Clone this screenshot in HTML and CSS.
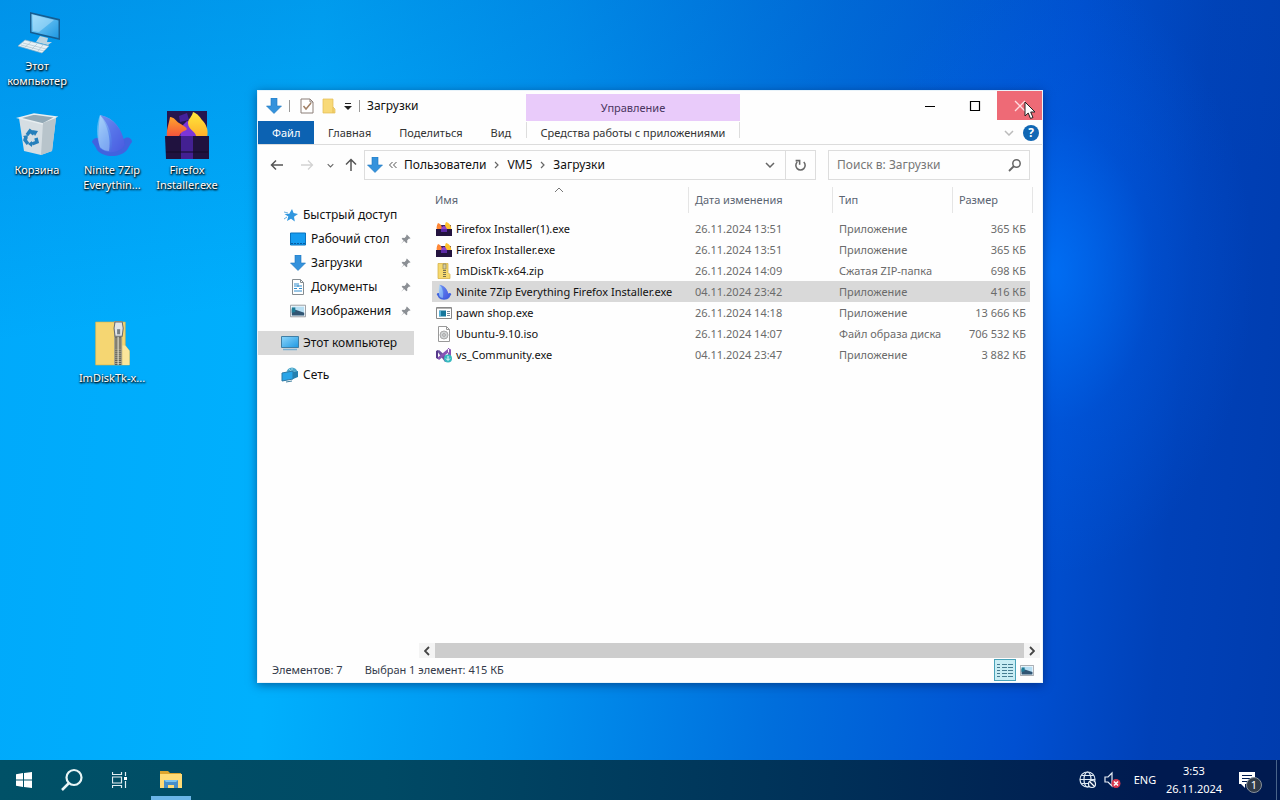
FILE: index.html
```html
<!DOCTYPE html>
<html lang="ru">
<head>
<meta charset="utf-8">
<title>Загрузки</title>
<link rel="stylesheet" href="styles.css">
</head>
<body>
<svg class="defs" width="0" height="0" aria-hidden="true">
  <defs>
    <linearGradient id="g-fin" x1="0" y1="0" x2="1" y2="1"><stop offset="0" stop-color="#a5d0fb"/><stop offset=".5" stop-color="#5a86ee"/><stop offset="1" stop-color="#3b45d4"/></linearGradient>
    <linearGradient id="g-fire" x1="0" y1="0" x2="0" y2="1"><stop offset="0" stop-color="#ffa52c"/><stop offset="1" stop-color="#f5503c"/></linearGradient>
    <linearGradient id="g-yellow" x1="0" y1="0" x2="0" y2="1"><stop offset="0" stop-color="#ffe93c"/><stop offset="1" stop-color="#ffae2a"/></linearGradient>
    <linearGradient id="g-screen" x1="0" y1="0" x2="1" y2="1"><stop offset="0" stop-color="#8ed6fb"/><stop offset="1" stop-color="#1e98e2"/></linearGradient>
    <symbol id="i-down" viewBox="0 0 16 16"><path d="M5 0h6v8h4.500L8 15.500.5 8H5z" fill="#3492dc" stroke="#1d75c0" stroke-width=".6"/></symbol>
    <symbol id="i-fin" viewBox="0 0 42 44"><path d="M1 29c1-4 5-5 8-3h24c3-3 8-1 8 3-2 2-3 5-5 8-7 8-23 8-30 0-1-3-3-5-5-8z" fill="#4163df"/><path d="M9 2c14 3 22 13 25 30-7 9-18 9-25 3-3-11-1-23 0-33z" fill="url(#g-fin)"/><path d="M9 2c9 9 13 20 12 37 6 0 10-3 13-7C31 15 22 5 9 2z" fill="#5468e6" opacity=".6"/><path d="M9 2C5 12 5 23 9 34c3 3 6 4 9 4 2-12-1-25-9-36z" fill="#a9d5fa" opacity=".5"/></symbol>
    <symbol id="i-fox" viewBox="0 0 44 48"><path d="M2 0h40v26H2z" fill="#25164f"/><path d="M14 5l8-3 2 7-9 2z" fill="#44219b"/><path d="M17 15l5-5 8 3 3 13H15z" fill="#7d35d8"/><path d="M2 26C1 19 4 13 5 6c4 0 6 4 9 6 3 2 6 3 8 6-2 3-6 1-8 8z" fill="url(#g-fire)"/><path d="M31 26c1-5-8-7-8-14 0-4 4-6 5-11 5 2 7 5 9 8 4 4 7 10 5 17z" fill="url(#g-yellow)"/><path d="M0 25h44v23H1z" fill="#20123f"/><path d="M16 25h12v23H16z" fill="#432092"/><path d="M1 41h42" stroke="#120a29"/></symbol>
    <symbol id="i-fox-small" viewBox="0 0 16 16"><path d="M1 4h14v6H1z" fill="#3a2160"/><path d="M1 9c-1-3 0-5 1-7 3 1 4 3 4 7z" fill="#ff8736"/><path d="M10 9c0-3-2-4 0-8 4 1 6 5 5 8z" fill="#ffc22f"/><path d="M5 9c0-3 2-4 3-4s3 2 3 4z" fill="#8e45cf"/><path d="M0 8h16v7H0z" fill="#24143f"/><path d="M5 8h6v3H5z" fill="#5c2aa5"/></symbol>
    <symbol id="i-zip" viewBox="0 0 36 44"><path d="M1 1h29v23l4 5v14H1z" fill="#f5d672" stroke="#d9b244" stroke-width=".6"/><path d="M30 24l4 5v14h-7V24z" fill="#fbe69a"/><path d="M19 0h8v43h-8z" fill="#aaa58a"/><path d="M23 12v31" stroke="#5c5d58" stroke-width="6" stroke-dasharray="1 1"/><path d="M23 12v31" stroke="#e9e6d7" stroke-width="1"/><path d="M20 1h7l1 6-1 8h-7l-1-8z" fill="#e1e4e7" stroke="#686d72"/><path d="M22 8h3v5h-3z" fill="#777f86"/></symbol>
    <symbol id="i-pin" viewBox="0 0 12 12"><path d="M7.500.5l4 4-1 .7-.7-.2-2 2 .2 2.200-1 1L4.500 7.700 1 11l3-3.700-2.200-2.200 1-1L5 4.300l2-2-.2-.9z" fill="#8b8f94"/></symbol>
    <symbol id="i-picture" viewBox="0 0 18 14"><path d="M.5.5h17v13H.5z" fill="#fff" stroke="#8c9298"/><path d="M2 2h14v10H2z" fill="#b6def3"/><path d="M2 5l5 1 9 3v3H2z" fill="#315573"/><path d="M2 3h4v5l-4 1z" fill="#1f7b96"/></symbol>
    <symbol id="i-monitor" viewBox="0 0 18 16"><path d="M.5 1.500h17v11H.5z" fill="url(#g-screen)" stroke="#3f7ea5"/><path d="M2 14.500h14" stroke="#7db1d2" stroke-width="1.500"/></symbol>
    <symbol id="i-chev" viewBox="0 0 10 6"><path d="M1 1l4 4 4-4" fill="none" stroke="currentColor" stroke-width="1.500"/></symbol>
  </defs>
</svg>
<main class="desktop">
  <a href="#" class="shortcut pc"><svg class="big" viewBox="0 0 48 48"><path d="M17 3l30 7v21l-30-7z" fill="#155d91"/><path d="M18.500 5l27 6.500v17.500l-27-6.300z" fill="url(#g-screen)"/><path d="M20 6l21 5-15 12-6-1z" fill="#c0e8fc" opacity=".45"/><path d="M27 27l8 2-1 4h5l-4 3-12-3z" fill="#bdd5e1"/><path d="M12 31l24 6-7 7-24-7z" fill="#e8f1f6" stroke="#8eb2c6" stroke-width=".7"/><path d="M10 34l23 6M8 36l23 6M18 33l-6 5M24 35l-5 5M30 36l-5 6" stroke="#abc3cf" stroke-width=".7"/></svg><span>Этот компьютер</span></a>
  <a href="#" class="shortcut bin"><svg class="big" viewBox="0 0 48 48"><path d="M6 5l15-4 22 4-4 33-11 4-17-4z" fill="#d6dee3"/><path d="M6 5l15-4 22 3-13 7z" fill="#93a9b6" stroke="#e8eef1" stroke-width="1.500"/><path d="M30 10l13-5-4 33-11 4z" fill="#b8c4cb"/><g fill="none" stroke="#267fbb" stroke-width="3.500"><path d="M14 22l3-4 4 3M23 25l1 4-5 2M15 31l-3-4 1-3"/></g><path d="M19 17l6 1-3 5zM19 28v6l-4-3zM10 23l5-1-1 5z" fill="#267fbb"/></svg><span>Корзина</span></a>
  <a href="#" class="shortcut ninite"><svg class="big"><use href="#i-fin" x="2" y="0" width="44" height="44"/></svg><span>Ninite 7Zip Everythin...</span></a>
  <a href="#" class="shortcut firefox"><svg class="big"><use href="#i-fox" x="1" y="0" width="46" height="48"/></svg><span>Firefox Installer.exe</span></a>
  <a href="#" class="shortcut imdisk"><svg class="big"><use href="#i-zip" x="6" y="2" width="38" height="45"/></svg><span>ImDiskTk-x...</span></a>

  <section class="window" aria-label="Загрузки">
    <header class="ribbon">
      <div class="ribbon-left">
        <div class="title">
          <svg class="ic16"><use href="#i-down"/></svg><i class="bar first"></i>
          <button class="plain" aria-label="Свойства"><svg class="qat" viewBox="0 0 14 16"><path d="M1 1h9l3 3v11H1z" fill="#fff" stroke="#8b7e78"/><path d="M10 1v3h3" fill="none" stroke="#8b7e78"/><path d="M3.500 8l2.500 3 5-6" fill="none" stroke="#a28065" stroke-width="1.500"/></svg></button>
          <button class="plain" aria-label="Новая папка"><svg class="qat" viewBox="0 0 14 16"><path d="M1 1h10v8l2 2v4H1z" fill="#f8d978" stroke="#e4bc52" stroke-width=".7"/><path d="M11 9v6" stroke="#e4bc52"/></svg></button>
          <button class="plain" aria-label="Настройка панели"><svg class="ic8" viewBox="0 0 8 8"><path d="M1 1.500h6" stroke="#222"/><path d="M0 4h8L4 8z" fill="#222"/></svg></button><i class="bar"></i>
          <h1>Загрузки</h1>
        </div>
        <nav class="tabs"><button class="file">Файл</button><button>Главная</button><button>Поделиться</button><button>Вид</button></nav>
      </div>
      <div class="context"><div class="context-title">Управление</div><button class="context-tab">Средства работы с приложениями</button></div>
      <div class="ribbon-right">
        <div class="controls">
          <button aria-label="Свернуть"><svg viewBox="0 0 12 12"><path d="M1 6.500h10" stroke="#000"/></svg></button>
          <button aria-label="Развернуть"><svg viewBox="0 0 12 12"><path d="M1.500 1.500h9v9h-9z" fill="none" stroke="#000" stroke-width="1.200"/></svg></button>
          <button class="close" aria-label="Закрыть"><svg viewBox="0 0 12 12"><path d="M1 1l10 10M11 1L1 11" stroke="#ffdcdf" stroke-width="1.300"/></svg><svg class="cursor" viewBox="0 0 12 19"><path d="M1 1v14l3.200-3 2.300 5.500 2.500-1L6.700 11H11z" fill="#fff" stroke="#222"/></svg></button>
        </div>
        <div class="help-row"><button class="plain pale" aria-label="Развернуть ленту"><svg class="chev"><use href="#i-chev"/></svg></button><button class="help" aria-label="Справка">?</button></div>
      </div>
    </header>
    <div class="location">
      <button class="plain" aria-label="Назад"><svg viewBox="0 0 14 14"><path d="M13 7H2M6 2.500L1.500 7 6 11.500" fill="none" stroke="#555" stroke-width="1.500"/></svg></button>
      <button class="plain forward" aria-label="Вперёд"><svg viewBox="0 0 14 14"><path d="M1 7h11M8 2.500L12.500 7 8 11.500" fill="none" stroke="#d2d2d2" stroke-width="1.300"/></svg></button>
      <button class="plain recent" aria-label="Последние"><svg class="tiny"><use href="#i-chev"/></svg></button>
      <button class="plain up" aria-label="Вверх"><svg viewBox="0 0 14 14"><path d="M7 13V2M2 6.500L7 1.500l5 5" fill="none" stroke="#555" stroke-width="1.500"/></svg></button>
      <div class="address">
        <svg class="ic16"><use href="#i-down"/></svg>
        <svg class="laquo" viewBox="0 0 8 8"><path d="M3.500 1l-3 3 3 3M7.500 1l-3 3 3 3" fill="none" stroke="#555"/></svg>
        <a href="#">Пользователи</a><svg class="sep" viewBox="0 0 5 8"><path d="M1 1l3 3-3 3" fill="none" stroke="#666" stroke-width="1.200"/></svg>
        <a href="#">VM5</a><svg class="sep" viewBox="0 0 5 8"><path d="M1 1l3 3-3 3" fill="none" stroke="#666" stroke-width="1.200"/></svg>
        <a href="#">Загрузки</a>
        <button class="plain drop" aria-label="Журнал"><svg class="chev"><use href="#i-chev"/></svg></button>
        <button class="refresh" aria-label="Обновить"><svg viewBox="0 0 12 12"><path d="M3 2.800a4.300 4.300 0 1 0 6 0M1.500 1.500h3.700v3.700" fill="none" stroke="#666" stroke-width="1.400"/></svg></button>
      </div>
      <div class="search"><input type="search" placeholder="Поиск в: Загрузки" aria-label="Поиск"><svg viewBox="0 0 14 14"><circle cx="8.500" cy="5.500" r="3.700" fill="none" stroke="#666" stroke-width="1.500"/><path d="M6 8l-5 5" stroke="#666" stroke-width="1.800"/></svg></div>
    </div>
    <div class="content">
      <nav class="tree">
        <a href="#" class="root"><svg class="ic16" viewBox="0 0 16 16"><path d="M9 2l1.600 4L15 7l-4 2.800.8 4.700L8 11.800 4 14l1.300-4.400L1.500 7l4.800-.3z" fill="#3197df"/><path d="M1 5l4 1M1 12l3-2" stroke="#64afe2"/></svg>Быстрый доступ</a>
        <a href="#"><svg class="ic16" viewBox="0 0 16 16"><path d="M.5 2h15v12H.5z" fill="#159cf0" stroke="#0872bd"/><path d="M1 12.500h14" stroke="#075ca0" stroke-dasharray="2 1"/></svg>Рабочий стол<svg class="pin"><use href="#i-pin"/></svg></a>
        <a href="#"><svg class="ic16"><use href="#i-down"/></svg>Загрузки<svg class="pin"><use href="#i-pin"/></svg></a>
        <a href="#"><svg class="ic16" viewBox="0 0 16 16"><path d="M2.500.5h8l3 3v12h-11z" fill="#fff" stroke="#858c91"/><path d="M10.500.5v3h3" fill="none" stroke="#858c91"/><path d="M4 5h3M4 7h8M4 9.500h3m2 0h3M4 12h8M8 4v4" stroke="#328dcd"/></svg>Документы<svg class="pin"><use href="#i-pin"/></svg></a>
        <a href="#"><svg class="ic16"><use href="#i-picture"/></svg>Изображения<svg class="pin"><use href="#i-pin"/></svg></a>
        <a href="#" class="root selected"><svg class="ic18"><use href="#i-monitor"/></svg>Этот компьютер</a>
        <a href="#" class="root net"><svg class="ic18" viewBox="0 0 18 16"><circle cx="11" cy="6" r="5.500" fill="#4ba6ca"/><path d="M6 5h10M11 1v10M8 2c3 3 4 5 1 8" stroke="#9bd8ec" fill="none"/><path d="M1 6l11-2v8L1 14z" fill="#29a5e8" stroke="#2a78a4"/><path d="M12 5l5-1v6l-5 2z" fill="#267fae"/><path d="M5 15l6-1" stroke="#407e9d"/></svg>Сеть</a>
      </nav>
      <div class="files">
        <table>
          <colgroup><col><col class="c-date"><col class="c-type"><col class="c-size"></colgroup>
          <thead><tr><th>Имя<svg class="sort" viewBox="0 0 10 6"><path d="M1 5l4-4 4 4" fill="none" stroke="#777"/></svg></th><th>Дата изменения</th><th>Тип</th><th>Размер</th></tr></thead>
          <tbody>
            <tr><td><svg class="ic16"><use href="#i-fox-small"/></svg>Firefox Installer(1).exe</td><td>26.11.2024 13:51</td><td>Приложение</td><td>365 КБ</td></tr>
            <tr><td><svg class="ic16"><use href="#i-fox-small"/></svg>Firefox Installer.exe</td><td>26.11.2024 13:51</td><td>Приложение</td><td>365 КБ</td></tr>
            <tr><td><svg class="ic16" viewBox="0 0 16 16"><path d="M2 .5h10v9l2 2v4H2z" fill="#f6d96e" stroke="#d1ac41" stroke-width=".7"/><path d="M8.500 1v14" stroke="#777050" stroke-width="3" stroke-dasharray="1 1"/><path d="M7 1h3v5H7z" fill="#d2cba3" stroke="#827744" stroke-width=".6"/></svg>ImDiskTk-x64.zip</td><td>26.11.2024 14:09</td><td>Сжатая ZIP-папка</td><td>698 КБ</td></tr>
            <tr class="selected"><td><svg class="ic16"><use href="#i-fin"/></svg>Ninite 7Zip Everything Firefox Installer.exe</td><td>04.11.2024 23:42</td><td>Приложение</td><td>416 КБ</td></tr>
            <tr><td><svg class="ic16" viewBox="0 0 16 16"><path d="M.5 2.500h15v11H.5z" fill="#fff" stroke="#888"/><path d="M1 3.500h14" stroke="#b4b4b4"/><path d="M3 5.500h7v6H3z" fill="#16779c"/><path d="M11 6.500h3m-3 2h3m-3 2h3" stroke="#789"/><path d="M3 6h2v5H3z" fill="#55b0d7"/></svg>pawn shop.exe</td><td>26.11.2024 14:18</td><td>Приложение</td><td>13 666 КБ</td></tr>
            <tr><td><svg class="ic16" viewBox="0 0 16 16"><path d="M2.500.5h8l3 3v12h-11z" fill="#fff" stroke="#999"/><path d="M10.500.5v3h3" fill="none" stroke="#999"/><circle cx="8" cy="9" r="4" fill="#d1d4d5" stroke="#aaa"/><circle cx="8" cy="9" r="1.300" fill="#fff" stroke="#999"/></svg>Ubuntu-9.10.iso</td><td>26.11.2024 14:07</td><td>Файл образа диска</td><td>706 532 КБ</td></tr>
            <tr><td><svg class="ic16" viewBox="0 0 16 16"><path d="M1 4l2-1 9 8v3L9 15z" fill="#69509f"/><path d="M12 1l3 1.500V12l-3 2zM1 11l2 2L13 5V1z" fill="#8854b5"/><path d="M0 4l2-1v9l-2-1z" fill="#563a8b"/><circle cx="12" cy="11.500" r="4" fill="#37bac0"/><path d="M12 9v4m-2-1.500l2 2 2-2" stroke="#e7ffff" fill="none"/></svg>vs_Community.exe</td><td>04.11.2024 23:47</td><td>Приложение</td><td>3 882 КБ</td></tr>
          </tbody>
        </table>
        <div class="scroll"><button aria-label="Влево"><svg viewBox="0 0 6 10"><path d="M5 1L1 5l4 4" fill="none" stroke="#444" stroke-width="1.800"/></svg></button><div class="thumb"></div><button aria-label="Вправо"><svg viewBox="0 0 6 10"><path d="M1 1l4 4-4 4" fill="none" stroke="#444" stroke-width="1.800"/></svg></button></div>
      </div>
    </div>
    <footer class="status"><span>Элементов: 7</span><span>Выбран 1 элемент: 415 КБ</span>
      <button class="view on" aria-label="Таблица"><svg viewBox="0 0 18 16"><path d="M1 2.500h3M1 5.500h3M1 8.500h3M1 11.500h3M1 14.500h3" stroke="#45798f"/><path d="M6 2.500h11M6 5.500h11M6 8.500h11M6 11.500h11M6 14.500h11" stroke="#477d91" stroke-dasharray="5 1"/></svg></button>
      <button class="view" aria-label="Крупные значки"><svg class="thumbs"><use href="#i-picture"/></svg></button>
    </footer>
  </section>
</main>
<footer class="taskbar">
  <button aria-label="Пуск"><svg class="start" viewBox="0 0 16 16"><path d="M0 2.200L7 1v6.500H0zM8 1l8-1v7.500H8zM0 8.500h7V15l-7-1.200zM8 8.500h8V16l-8-1z" fill="#fff"/></svg></button>
  <button aria-label="Поиск"><svg class="find" viewBox="0 0 24 24"><circle cx="14" cy="9.500" r="7.500" fill="none" stroke="#e8f5f6" stroke-width="2.200"/><path d="M9 15l-7 7" stroke="#e8f5f6" stroke-width="2.500"/></svg></button>
  <button aria-label="Представление задач"><svg class="start" viewBox="0 0 16 16"><path d="M.5 0v2.500h9V0M.5 5h9v6h-9zM.5 16v-2.500h9V16M13.500 0v4M13.500 9v7" fill="none" stroke="#e1eef2" stroke-width="1.200"/><path d="M12 5h3v3h-3z" fill="#fff"/></svg></button>
  <button class="active" aria-label="Проводник"><svg class="explorer" viewBox="0 0 22 18"><path d="M0 0h8l2 2h11v3H0z" fill="#dda52f"/><path d="M0 3h22v14H0z" fill="#ffdb76"/><path d="M4 9h14v8h-4v-3H8v3H4z" fill="#468ec9"/><path d="M4 9h14l-2 2H6z" fill="#7ac3ef"/></svg></button>
  <div class="tray">
    <button aria-label="Сеть"><svg viewBox="0 0 18 18"><g fill="none" stroke="#dfebf4" stroke-width="1.200"><circle cx="8.500" cy="8.500" r="7.500"/><ellipse cx="8.500" cy="8.500" rx="3.500" ry="7.500"/><path d="M1 8.500h15M2.500 4.500h12M2.500 12.500h8"/></g><circle cx="13" cy="13" r="3.500" fill="#06214b" stroke="#e9f2f8" stroke-width="1.200"/><path d="M10.500 10.500l5 5" stroke="#fff" stroke-width="1.200"/></svg></button>
    <button aria-label="Звук отключён"><svg viewBox="0 0 18 18"><path d="M2 6h3l4-4v13l-4-4H2z" fill="none" stroke="#e7eef5" stroke-width="1.200"/><circle cx="13" cy="12.500" r="4.500" fill="#d8384e"/><path d="M11 10.500l4 4m0-4l-4 4" stroke="#fff" stroke-width="1.500"/></svg></button>
    <button class="lang">ENG</button>
    <button class="clock"><span>3:53</span><span>26.11.2024</span></button>
    <button class="notice" aria-label="Уведомления"><svg viewBox="0 0 18 18"><path d="M1 1h16v12H7v4l-4-4H1z" fill="#fff"/><path d="M4 4.500h10M4 7.500h10M4 10.500h7" stroke="#001b50" stroke-width="1.200"/></svg><b>1</b></button>
  </div>
</footer>
</body>
</html>
```
FILE: styles.css
```css
* { box-sizing: border-box; }
body {
  margin: 0;
  height: 100vh;
  display: flex;
  flex-direction: column;
  overflow: hidden;
  font: 12px/16px "Noto Sans", "Open Sans", sans-serif;
  color: #111;
  background:
    radial-gradient(ellipse 16% 38% at 82% 34%, rgba(0, 120, 255, .75), rgba(0, 100, 240, .25) 50%, transparent),
    linear-gradient(172deg, rgba(0, 80, 180, .25), transparent 35%),
    linear-gradient(95deg, #00a9fb 0%, #00b0fd 24%, #0095f0 42%, #006edc 62%, #0050d2 80%, #0041b8 90%, #003cae 100%);
}
button, input { font: inherit; color: inherit; border: 0; padding: 0; background: none; }
a { color: inherit; text-decoration: none; }
svg { flex: none; display: block; }
.defs { position: absolute; }
.desktop { position: relative; flex: 1; min-height: 0; }

.shortcut {
  position: absolute;
  width: 74px;
  display: flex;
  flex-direction: column;
  align-items: center;
  gap: 1px;
  line-height: 15px;
  font-size: 11px;
  text-align: center;
  color: #fff;
  text-shadow: 0 1px 2px #000, 1px 1px 2px #000;
}
.big { width: 48px; height: 48px; }
.pc { left: 0; top: 9px; }
.bin { left: 0; top: 113px; }
.ninite { left: 75px; top: 113px; }
.firefox { left: 150px; top: 111px; gap: 3px; }
.imdisk { left: 75px; top: 319px; gap: 3px; }

.window {
  position: absolute;
  inset: 90px 237px 77px 257px;
  display: flex;
  flex-direction: column;
  background: #fefefe;
  border: 1px solid #e8f3fa;
  box-shadow: 0 2px 9px rgba(0, 20, 70, .5);
}
.ribbon { display: flex; height: 54px; border-bottom: 1px solid #dcdcdc; }
.ribbon-left { width: 268px; }
.title { height: 30px; padding-left: 8px; display: flex; align-items: center; gap: 7px; }
.title h1 { margin: 0; font-size: 12px; font-weight: 400; }
.bar { width: 1px; height: 12px; background: #999; }
.bar.first { margin-right: 3px; }
.plain { display: flex; align-items: center; justify-content: center; }
.ic16 { width: 16px; height: 16px; }
.ic18 { width: 18px; height: 16px; }
.qat { width: 14px; height: 16px; margin-right: 1px; }
.ic8 { width: 8px; height: 8px; }
.tabs { display: flex; height: 23px; font-size: 11px; color: #333; }
.tabs button { padding: 0 14px; }
.tabs .file { width: 56px; background: #0c62b2; color: #fff; }
.context { width: 214px; padding-top: 3px; font-size: 11px; text-align: center; }
.context-title { height: 27px; line-height: 27px; background: #e9cbfa; color: #4a3560; }
.context-tab { width: 100%; height: 16px; margin-top: 1px; border: solid #ddd; border-width: 0 1px; line-height: 22px; color: #333; white-space: nowrap; }
.ribbon-right { flex: 1; }
.controls { display: flex; justify-content: flex-end; }
.controls button { width: 45px; height: 29px; display: flex; align-items: center; justify-content: center; }
.controls svg { width: 12px; height: 12px; }
.controls .close { position: relative; background: #ee6a76; }
.controls .cursor { position: absolute; left: 27px; top: 10px; width: 12px; height: 19px; }
.help-row { display: flex; justify-content: flex-end; align-items: center; gap: 9px; height: 25px; padding-right: 3px; }
.chev { width: 10px; height: 6px; color: #666; }
.pale .chev { color: #bbb; }
.help { width: 16px; height: 16px; border-radius: 50%; background: #1167b4; color: #fff; font-weight: 700; line-height: 16px; }

.location { display: flex; align-items: center; height: 40px; padding: 0 12px; }
.location > .plain { width: 14px; height: 14px; }
.location .forward { margin-left: 16px; }
.location .recent { margin-left: 9px; }
.location .up { margin: 0 6px 0 7px; }
.location > .plain svg { width: 14px; height: 14px; }
.location > .plain .tiny { width: 7px; height: 5px; color: #666; }
.address { flex: 1; display: flex; align-items: center; height: 30px; border: 1px solid #ddd; padding-left: 2px; }
.laquo { width: 8px; height: 8px; margin: 0 7px 0 6px; }
.sep { width: 5px; height: 8px; margin: 0 8px; }
.drop { width: 30px; height: 28px; margin-left: auto; }
.refresh { width: 30px; height: 28px; border-left: 1px solid #ddd; display: flex; align-items: center; justify-content: center; }
.refresh svg { width: 13px; height: 13px; }
.search { width: 202px; height: 30px; margin-left: 12px; padding: 0 7px 0 8px; border: 1px solid #ddd; display: flex; align-items: center; }
.search input { flex: 1; min-width: 0; outline: 0; }
.search input::placeholder { color: #777; opacity: 1; }
.search svg { width: 14px; height: 14px; }

.content { flex: 1; min-height: 0; display: flex; }
.tree { width: 161px; padding: 18px 5px 0 0; }
.tree a { display: flex; align-items: center; height: 24px; padding-left: 32px; gap: 5px; white-space: nowrap; }
.tree .root { padding-left: 25px; gap: 4px; }
.tree .root.selected { margin-top: 8px; padding-left: 23px; background: #d9d9d9; }
.tree .net { margin-top: 8px; padding-left: 23px; }
.pin { width: 11px; height: 11px; margin-left: auto; margin-right: 3px; }
.files { flex: 1; display: flex; flex-direction: column; padding: 2px 2px 0 0; min-width: 0; }
table { table-layout: fixed; border-collapse: separate; border-spacing: 0; margin: 0 7px 0 13px; font-size: 11px; }
.c-date { width: 144px; }
.c-type { width: 120px; }
.c-size { width: 80px; }
th { height: 26px; padding: 0 0 0 6px; font-weight: 400; text-align: left; color: #5a6472; border-right: 1px solid #e5e5e5; position: relative; }
th:first-child { padding-left: 3px; }
thead::after { content: ""; display: block; height: 5px; }
.sort { position: absolute; left: 122px; top: 0; width: 10px; height: 6px; }
td { height: 21px; padding: 0 0 0 6px; white-space: nowrap; color: #6b6b6b; }
td:first-child { display: flex; align-items: center; gap: 4px; padding-left: 4px; color: #111; }
td:last-child { text-align: right; padding: 0 4px 0 0; border-right: 3px solid transparent; background-clip: padding-box; }
tr.selected td { background-color: #d9d9d9; }
.scroll { margin-top: auto; display: flex; height: 15px; background: #f4f4f4; }
.scroll button { width: 16px; display: flex; align-items: center; justify-content: center; }
.scroll svg { width: 6px; height: 10px; }
.thumb { flex: 1; background: #cdcdcd; }
.status { height: 24px; display: flex; align-items: center; padding: 0 4px 0 14px; font-size: 11px; color: #333a4a; }
.status span { margin-right: 22px; }
.view { width: 22px; height: 22px; display: flex; align-items: center; justify-content: center; border: 1px solid transparent; }
.view.on { margin-left: auto; background: #c9edf4; border-color: #4aa3b9; }
.view svg { width: 18px; height: 16px; }
.view .thumbs { width: 14px; height: 11px; }

.taskbar { height: 40px; display: flex; background: linear-gradient(90deg, #005167, #004a65 30%, #003058 65%, #001a50 90%); color: #fff; }
.taskbar > button { width: 48px; display: flex; align-items: center; justify-content: center; }
.taskbar .active { width: 40px; margin-left: 7px; border-bottom: 4px solid #6ab5e8; padding-top: 3px; }
.start { width: 16px; height: 16px; }
.find { width: 24px; height: 24px; }
.explorer { width: 22px; height: 18px; }
.tray { margin-left: auto; display: flex; align-items: center; padding-right: 6px; border-right: 1px solid #49648a; margin-right: 3px; }
.tray svg { width: 18px; height: 18px; }
.tray button { width: 24px; }
.tray .lang { width: 30px; margin-left: 3px; font-size: 11px; }
.tray .clock { width: 56px; margin-left: 6px; display: flex; flex-direction: column; align-items: center; line-height: 18px; font-size: 11px; }
.tray .notice { position: relative; margin-left: 16px; width: 32px; }
.notice svg { margin: 0; }
.notice b { position: absolute; left: 8px; top: 6px; width: 16px; height: 16px; border: 1px solid #87909a; border-radius: 50%; background: #303b48; font-size: 11px; line-height: 14px; font-weight: 400; }
```
